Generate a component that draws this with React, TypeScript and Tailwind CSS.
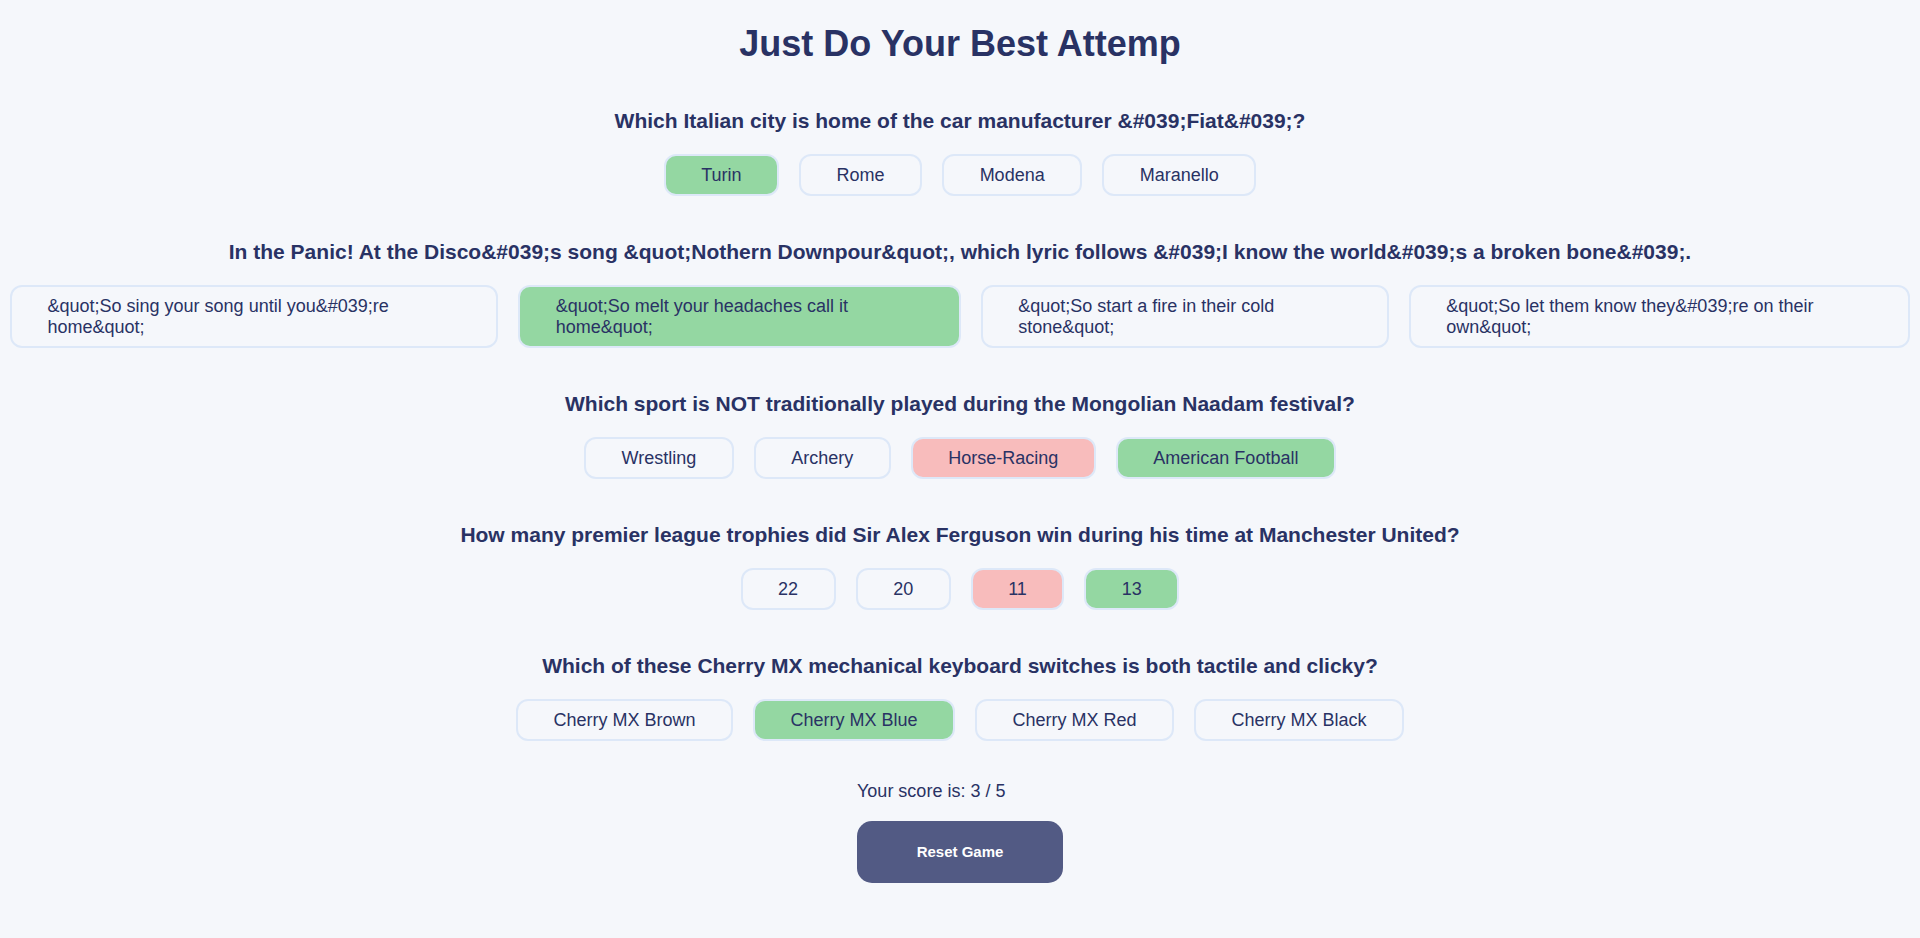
import React from "react";

type Q = { q: string; answers: { t: string; s?: "ok" | "bad" }[] };

const questions: Q[] = [
  {
    q: "Which Italian city is home of the car manufacturer &#039;Fiat&#039;?",
    answers: [{ t: "Turin", s: "ok" }, { t: "Rome" }, { t: "Modena" }, { t: "Maranello" }],
  },
  {
    q: "In the Panic! At the Disco&#039;s song &quot;Nothern Downpour&quot;, which lyric follows &#039;I know the world&#039;s a broken bone&#039;.",
    answers: [
      { t: "&quot;So sing your song until you&#039;re home&quot;" },
      { t: "&quot;So melt your headaches call it home&quot;", s: "ok" },
      { t: "&quot;So start a fire in their cold stone&quot;" },
      { t: "&quot;So let them know they&#039;re on their own&quot;" },
    ],
  },
  {
    q: "Which sport is NOT traditionally played during the Mongolian Naadam festival?",
    answers: [{ t: "Wrestling" }, { t: "Archery" }, { t: "Horse-Racing", s: "bad" }, { t: "American Football", s: "ok" }],
  },
  {
    q: "How many premier league trophies did Sir Alex Ferguson win during his time at Manchester United?",
    answers: [{ t: "22" }, { t: "20" }, { t: "11", s: "bad" }, { t: "13", s: "ok" }],
  },
  {
    q: "Which of these Cherry MX mechanical keyboard switches is both tactile and clicky?",
    answers: [{ t: "Cherry MX Brown" }, { t: "Cherry MX Blue", s: "ok" }, { t: "Cherry MX Red" }, { t: "Cherry MX Black" }],
  },
];

function Answer({ t, s }: { t: string; s?: "ok" | "bad" }) {
  const bg = s === "ok" ? "bg-[#94d7a2]" : s === "bad" ? "bg-[#f8bcbc]" : "bg-[#f5f7fb]";
  return (
    <button
      className={`${bg} border-2 border-[#dde8f8] rounded-[12px] px-[35.5px] py-[8.5px] text-[18px] leading-[21px] text-left text-[#293264]`}
    >
      {t}
    </button>
  );
}

export default function App() {
  return (
    <div
      className="min-h-[938px] bg-[#f5f7fb] text-[#293264] pt-[23px]"
      style={{ fontFamily: '"Liberation Sans", Arial, sans-serif' }}
    >
      <h1 className="text-center font-bold text-[36px] leading-[41px] mb-[45px]">Just Do Your Best Attemp</h1>
      <div className="flex flex-col gap-[44px]">
        {questions.map((q, i) => (
          <div key={i} className="flex flex-col">
            <h2 className="text-center font-bold text-[21px] leading-[24px] mb-[21px]">{q.q}</h2>
            <div className="flex justify-center gap-5 px-[10px]">
              {q.answers.map((a, j) => (
                <Answer key={j} t={a.t} s={a.s} />
              ))}
            </div>
          </div>
        ))}
      </div>
      <div className="mx-auto w-fit flex flex-col items-start mt-[40px]">
        <p className="text-[18px] leading-[21px]">Your score is: 3 / 5</p>
        <button className="mt-[19px] w-[206px] h-[62px] rounded-[15px] bg-[#525a84] text-white font-bold text-[15px]">
          Reset Game
        </button>
      </div>
    </div>
  );
}
